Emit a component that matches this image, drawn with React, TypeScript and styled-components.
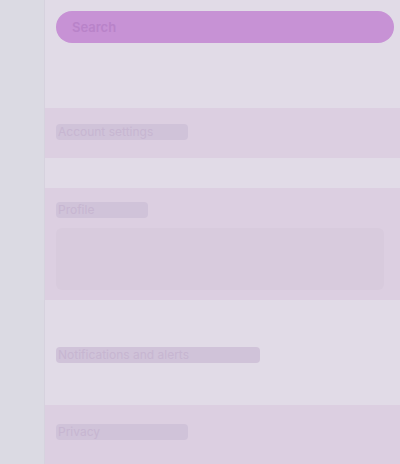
import styled, { createGlobalStyle } from "styled-components";

const Global = createGlobalStyle`
  html, body {
    margin: 0;
    padding: 0;
    background: #e1dbe7;
    font-family: "Inter", "Noto Sans", sans-serif;
  }
`;

const Shell = styled.div`
  display: flex;
  width: 400px;
  height: 464px;
  overflow: hidden;
`;

const Rail = styled.nav`
  width: 44px;
  flex-shrink: 0;
  background: #dbdae3;
  border-right: 1px solid #d6d2de;
`;

const Main = styled.main`
  flex: 1;
  display: flex;
  flex-direction: column;
  padding: 11px 6px 0 11px;
  min-width: 0;
  > * {
    flex-shrink: 0;
  }
`;

const SearchBar = styled.div`
  height: 32px;
  border-radius: 16px;
  background: #c792d5;
  display: flex;
  align-items: center;
  padding: 0 16px;
  color: #b983c9;
  font-size: 13px;
  font-weight: 600;
`;

const Section = styled.section<{ $height: number; $tint?: boolean; $top: number }>`
  height: ${({ $height }) => $height}px;
  box-sizing: border-box;
  margin: 0 -6px 0 -11px;
  padding: ${({ $top }) => $top}px 16px 0 11px;
  background: ${({ $tint }) => ($tint ? "#dccfe1" : "transparent")};
  display: flex;
  flex-direction: column;
  gap: 10px;
`;

const Label = styled.div<{ $width: number }>`
  box-sizing: border-box;
  width: ${({ $width }) => $width}px;
  height: 16px;
  border-radius: 4px;
  background: #d0c3d9;
  color: #c7b6d1;
  font-size: 12px;
  line-height: 16px;
  padding-left: 2px;
  white-space: nowrap;
  overflow: hidden;
`;

const Body = styled.div`
  height: 62px;
  border-radius: 6px;
  background: #d8cbdd;
`;

const Spacer = styled.div<{ $h: number }>`
  height: ${({ $h }) => $h}px;
`;

export default function App() {
  return (
    <>
      <Global />
      <Shell>
        <Rail />
        <Main>
          <SearchBar>Search</SearchBar>
          <Spacer $h={65} />
          <Section $height={50} $top={16} $tint>
            <Label $width={132}>Account settings</Label>
          </Section>
          <Spacer $h={30} />
          <Section $height={112} $top={14} $tint>
            <Label $width={92}>Profile</Label>
            <Body />
          </Section>
          <Spacer $h={30} />
          <Section $height={50} $top={17}>
            <Label $width={204}>Notifications and alerts</Label>
          </Section>
          <Spacer $h={25} />
          <Section $height={70} $top={19} $tint>
            <Label $width={132}>Privacy</Label>
          </Section>
        </Main>
      </Shell>
    </>
  );
}
